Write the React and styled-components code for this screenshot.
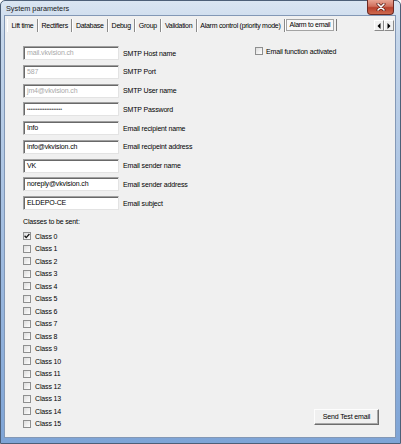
import styled, { createGlobalStyle } from 'styled-components';

const Global = createGlobalStyle`
  html, body { margin: 0; padding: 0; background: #fff; }
  body { font-family: "Liberation Sans", Arial, sans-serif; }
`;

const Window = styled.div`
  width: 401px;
  height: 444px;
  box-sizing: border-box;
  display: flex;
  flex-direction: column;
  border: 1px solid #4d5f78;
  border-radius: 5px 5px 0 0;
  padding: 0 5px 6px 4px;
  background: linear-gradient(to bottom, #dae5f2 0%, #c5d6ea 8%, #a9c2e2 45%, #7ea4d6 100%);
`;

const TitleBar = styled.div`
  height: 15px;
  display: flex;
  align-items: flex-start;
`;

const Title = styled.div`
  font-size: 7.3px;
  color: #1b1b1b;
  line-height: 15px;
  padding-left: 1px;
`;

const CloseButton = styled.div`
  margin-left: auto;
  margin-right: 1px;
  margin-top: -1px;
  width: 27px;
  height: 15px;
  box-sizing: border-box;
  border: 1px solid #6b2a24;
  border-top: none;
  border-radius: 0 0 4px 4px;
  background: linear-gradient(to bottom, #e8a493 0%, #d0705d 45%, #b8402c 55%, #cf6a4e 100%);
  display: flex;
  align-items: center;
  justify-content: center;
`;

const Content = styled.div`
  flex: 1;
  display: flex;
  flex-direction: column;
  background: #f0f0f0;
  box-shadow: 0 0 0 1px #8398b6;
  font-size: 7px;
  letter-spacing: -0.15px;
  color: #000;
`;

const TabBar = styled.div`
  margin-top: 3px;
  height: 13px;
  padding-left: 2px;
  display: flex;
  letter-spacing: -0.28px;
`;

const Tab = styled.div`
  padding: 0 3.5px;
  line-height: 13px;
  white-space: nowrap;
  box-sizing: border-box;
  border-right: 1px solid #8a8a8a;
  box-shadow: 1px 0 0 #fff;
  ${p => p.$first && 'border-left: 1px solid #fff;'}
  ${p => p.$active && `
    margin-left: 1px;
    line-height: 10px;
    height: 12px;
    padding: 0 2.5px;
    border: 1px solid #a3a3a3;
    background: #f8f8f8;
    box-shadow: 2px 0 0 #f0f0f0, 3px 0 0 #7a7a7a;
  `}
`;

const Scroller = styled.div`
  margin-left: auto;
  margin-right: 1px;
  display: flex;
  align-items: center;
`;

const ScrollButton = styled.div`
  width: 10px;
  height: 11px;
  box-sizing: border-box;
  border: 1px solid #a0a0a0;
  border-color: #fff #8a8a8a #8a8a8a #fff;
  background: #f0f0f0;
  display: flex;
  align-items: center;
  justify-content: center;
`;

const Panel = styled.div`
  flex: 1;
  display: grid;
  grid-template-columns: 232px 1fr;
  padding: 14px 16px 7.25px 18px;
`;

const LeftColumn = styled.div`
  display: flex;
  flex-direction: column;
`;

const Fields = styled.div`
  display: flex;
  flex-direction: column;
  gap: 4.75px;
`;

const FieldRow = styled.div`
  height: 14px;
  display: flex;
  align-items: center;
`;

const TextBox = styled.div`
  width: 96px;
  height: 14px;
  box-sizing: border-box;
  border: 1px solid;
  border-color: #a0a0a0 #e3e3e3 #e3e3e3 #a0a0a0;
  box-shadow: inset 1px 1px 0 #696969;
  background: #fff;
  padding-left: 3px;
  line-height: 12px;
  white-space: nowrap;
  overflow: hidden;
  color: ${p => p.$masked ? '#a9a9a9' : '#000'};
`;

const Password = styled.span`
  font-size: 5px;
  letter-spacing: 0;
  color: #555;
`;

const FieldLabel = styled.span`
  margin-left: 4px;
  white-space: nowrap;
`;

const ClassesTitle = styled.div`
  height: 12px;
  line-height: 12px;
  margin-top: 6px;
  margin-bottom: 1.75px;
`;

const CheckRow = styled.div`
  height: 12.5px;
  display: flex;
  align-items: center;
  gap: 4px;
  white-space: nowrap;
`;

const Box = styled.span`
  width: 8px;
  height: 8px;
  box-sizing: border-box;
  border: 1px solid #8e8f8f;
  background: linear-gradient(135deg, #dcdcdc, #ffffff);
  display: inline-flex;
  align-items: center;
  justify-content: center;
  flex-shrink: 0;
`;

const RightColumn = styled.div`
  display: flex;
  flex-direction: column;
  align-items: flex-start;
`;

const ActivateRow = styled(CheckRow)`
  margin-top: -1px;
  height: 12px;
  gap: 3px;
`;

const SendButton = styled.div`
  margin-top: auto;
  margin-bottom: 4.75px;
  align-self: flex-end;
  width: 65px;
  height: 16px;
  box-sizing: border-box;
  border: 1px solid;
  border-color: #fdfdfd #6d6d6d #6d6d6d #fdfdfd;
  box-shadow: inset -1px -1px 0 #a8a8a8;
  background: #f0f0f0;
  text-align: center;
  line-height: 14px;
  white-space: nowrap;
`;

const tabs = [
  'Lift time',
  'Rectifiers',
  'Database',
  'Debug',
  'Group',
  'Validation',
  'Alarm control (priority mode)',
];

const fields = [
  { value: 'mail.vkvision.ch', label: 'SMTP Host name', masked: true },
  { value: '587', label: 'SMTP Port', masked: true },
  { value: 'jm4@vkvision.ch', label: 'SMTP User name', masked: true },
  { password: true, label: 'SMTP Password' },
  { value: 'Info', label: 'Email recipient name' },
  { value: 'info@vkvision.ch', label: 'Email recipeint address' },
  { value: 'VK', label: 'Email sender name' },
  { value: 'noreply@vkvision.ch', label: 'Email sender address' },
  { value: 'ELDEPO-CE', label: 'Email subject' },
];

const classes = Array.from({ length: 16 }, (_, i) => i);

function Check({ checked }) {
  return (
    <Box>
      {checked && (
        <svg width="6" height="6" viewBox="0 0 6 6">
          <polyline points="0.6,2.8 2.2,4.6 5.4,1" fill="none" stroke="#111" strokeWidth="1.3" />
        </svg>
      )}
    </Box>
  );
}

export default function App() {
  return (
    <>
      <Global />
      <Window>
        <TitleBar>
          <Title>System parameters</Title>
          <CloseButton>
            <svg width="10" height="8" viewBox="0 0 10 8">
              <path d="M2 1 L8 7 M8 1 L2 7" stroke="#5a1a12" strokeWidth="3" strokeLinecap="round" />
              <path d="M2 1 L8 7 M8 1 L2 7" stroke="#fff" strokeWidth="1.6" strokeLinecap="round" />
            </svg>
          </CloseButton>
        </TitleBar>
        <Content>
          <TabBar>
            {tabs.map((t, i) => (
              <Tab key={t} $first={i === 0}>{t}</Tab>
            ))}
            <Tab $active>Alarm to email</Tab>
            <Scroller>
              <ScrollButton>
                <svg width="4" height="6" viewBox="0 0 4 6"><polygon points="3.5,0 0.5,3 3.5,6" fill="#000" /></svg>
              </ScrollButton>
              <ScrollButton>
                <svg width="4" height="6" viewBox="0 0 4 6"><polygon points="0.5,0 3.5,3 0.5,6" fill="#000" /></svg>
              </ScrollButton>
            </Scroller>
          </TabBar>
          <Panel>
            <LeftColumn>
              <Fields>
                {fields.map(f => (
                  <FieldRow key={f.label}>
                    <TextBox $masked={f.masked}>
                      {f.password ? <Password>••••••••••••••••••••</Password> : f.value}
                    </TextBox>
                    <FieldLabel>{f.label}</FieldLabel>
                  </FieldRow>
                ))}
              </Fields>
              <ClassesTitle>Classes to be sent:</ClassesTitle>
              {classes.map(c => (
                <CheckRow key={c}>
                  <Check checked={c === 0} />
                  Class {c}
                </CheckRow>
              ))}
            </LeftColumn>
            <RightColumn>
              <ActivateRow>
                <Check />
                Email function activated
              </ActivateRow>
              <SendButton>Send Test email</SendButton>
            </RightColumn>
          </Panel>
        </Content>
      </Window>
    </>
  );
}
